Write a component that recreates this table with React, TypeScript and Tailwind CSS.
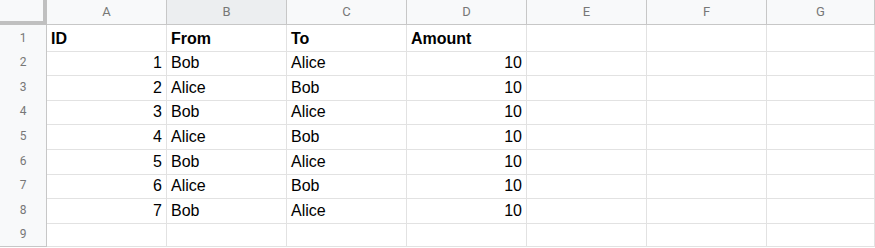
const cols = ["A", "B", "C", "D", "E", "F", "G"];
const rowHeights = ["h-[24px]", "h-[25px]", "h-[24px]", "h-[25px]", "h-[25px]", "h-[24px]", "h-[25px]", "h-[25px]", "h-[25px]"];

type Cell = { v: string; right?: boolean; bold?: boolean };

const data: Cell[][] = [
  [{ v: "ID", bold: true }, { v: "From", bold: true }, { v: "To", bold: true }, { v: "Amount", bold: true }],
  [{ v: "1", right: true }, { v: "Bob" }, { v: "Alice" }, { v: "10", right: true }],
  [{ v: "2", right: true }, { v: "Alice" }, { v: "Bob" }, { v: "10", right: true }],
  [{ v: "3", right: true }, { v: "Bob" }, { v: "Alice" }, { v: "10", right: true }],
  [{ v: "4", right: true }, { v: "Alice" }, { v: "Bob" }, { v: "10", right: true }],
  [{ v: "5", right: true }, { v: "Bob" }, { v: "Alice" }, { v: "10", right: true }],
  [{ v: "6", right: true }, { v: "Alice" }, { v: "Bob" }, { v: "10", right: true }],
  [{ v: "7", right: true }, { v: "Bob" }, { v: "Alice" }, { v: "10", right: true }],
  [],
];

const gridCols = "grid grid-cols-[47px_120px_120px_120px_120px_120px_120px_108px]";

export default function App() {
  return (
    <div className="w-[875px] h-[248px] overflow-hidden bg-white font-['Liberation_Sans',Arial,sans-serif]">
      {/* column headers */}
      <div className={`${gridCols} h-[25px]`}>
        <div className="bg-[#f8f9fa] border-r-4 border-b-4 border-[#c0c0c0]" />
        {cols.map((c) => (
          <div
            key={c}
            className={`flex items-center justify-center border-r border-b border-[#c7c7c7] font-['Roboto',sans-serif] text-[13px] text-[#777] ${
              c === "B" ? "bg-[#eceef0]" : "bg-[#f8f9fa]"
            }`}
          >
            {c}
          </div>
        ))}
      </div>

      {rowHeights.map((h, r) => (
        <div key={r} className={`${gridCols} ${h}`}>
          <div className="flex items-center justify-center bg-[#f8f9fa] border-r border-b border-[#c7c7c7] font-['Roboto',sans-serif] text-[12px] text-[#777]">
            {r + 1}
          </div>
          {cols.map((c, i) => {
            const cell = data[r][i];
            return (
              <div
                key={c}
                className={`flex items-center px-[4px] pt-[2px] border-r border-b border-[#e2e2e2] text-[16px] text-black ${
                  cell?.right ? "justify-end" : ""
                } ${cell?.bold ? "font-bold" : ""}`}
              >
                {cell?.v}
              </div>
            );
          })}
        </div>
      ))}
    </div>
  );
}
